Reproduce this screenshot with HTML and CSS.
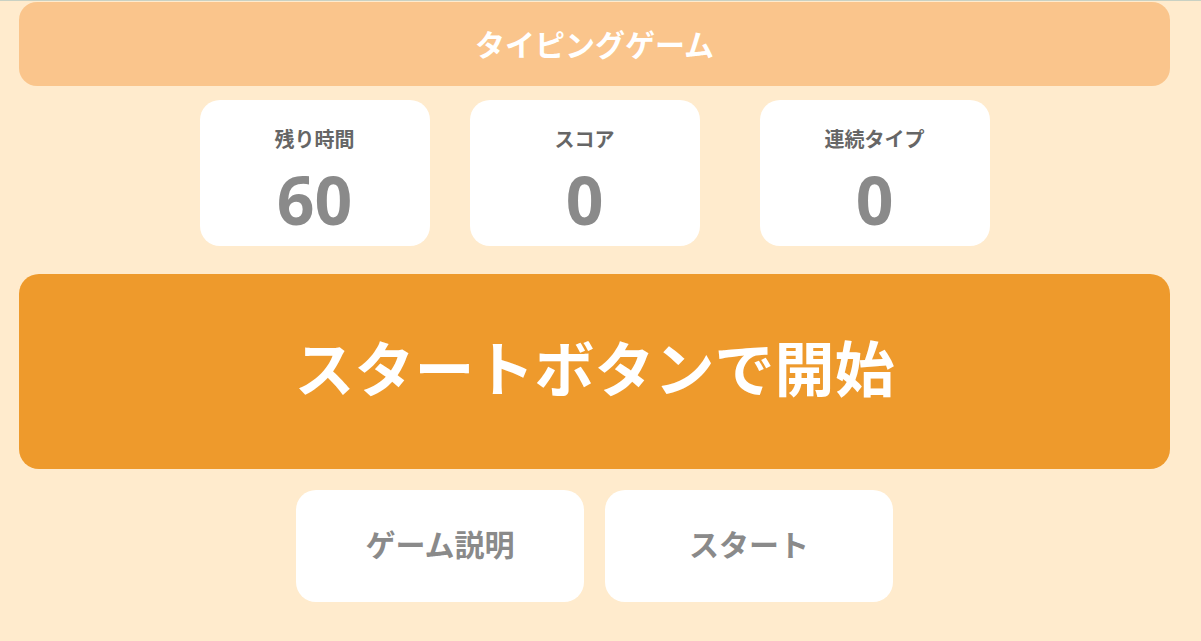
FILE: index.html
```html
<!DOCTYPE html>
<html lang="ja">
<head>
  <meta charset="UTF-8" />
  <meta name="viewport" content="width=device-width, initial-scale=1.0"/>
  <title>タイピングゲーム</title>
  <link rel="stylesheet" href="styles.css">
</head>
<body>

  <div class="wrap">
    <h1 class="title">タイピングゲーム</h1>

    <div class="stats">
      <div class="stat">
        <p class="stat-label">残り時間</p>
        <p class="stat-value" id="time">60</p>
      </div>
      <div class="stat">
        <p class="stat-label">スコア</p>
        <p class="stat-value" id="score">0</p>
      </div>
      <div class="stat stat-combo">
        <p class="stat-label">連続タイプ</p>
        <p class="stat-value" id="combo">0</p>
      </div>
    </div>

    <div class="word-box">
      <p id="word">スタートボタンで開始</p>
    </div>

    <div class="controls">
      <button class="btn" id="help">ゲーム説明</button>
      <button class="btn" id="start">スタート</button>
    </div>
  </div>

</body>
</html>
```

FILE: styles.css
```css
body {
  margin: 0;
  padding-top: 1px;
  border-top: 1px solid #c9d1c3;
  background-color: #ffebcd;
  font-family: "Open Sans", "Noto Sans CJK JP", sans-serif;
}

.wrap {
  width: 1151px;
  margin-left: 19px;
}

.title {
  margin: 0;
  height: 84px;
  padding-bottom: 3px;
  box-sizing: border-box;
  display: flex;
  justify-content: center;
  align-items: center;
  background-color: #fac58c;
  border-radius: 18px;
  color: #fff;
  font-size: 30px;
  font-weight: bold;
}

.stats {
  display: flex;
  justify-content: center;
  margin-top: 14px;
}

.stat {
  width: 230px;
  height: 146px;
  margin: 0 20px;
  background-color: #fff;
  border-radius: 20px;
  display: flex;
  flex-direction: column;
  align-items: center;
  box-sizing: border-box;
  padding-top: 26px;
}

.stat-combo {
  margin-left: 40px;
}

.stat-label {
  margin: 0;
  font-size: 20px;
  font-weight: bold;
  color: #666;
  line-height: 28px;
}

.stat-value {
  margin: 12px 0 0;
  font-size: 66px;
  font-weight: bold;
  color: #8a8a8a;
  line-height: 66px;
}

.word-box {
  margin-top: 28px;
  height: 195px;
  padding-bottom: 12px;
  box-sizing: border-box;
  background-color: #ee9a2c;
  border-radius: 20px;
  display: flex;
  justify-content: center;
  align-items: center;
}

#word {
  margin: 0;
  color: #fff;
  font-size: 60px;
  font-weight: bold;
}

.controls {
  display: flex;
  justify-content: center;
  gap: 21px;
  margin-top: 21px;
}

.btn {
  width: 288px;
  height: 112px;
  padding: 0 0 6px;
  border: none;
  border-radius: 20px;
  background-color: #fff;
  color: #8a8a8a;
  font-family: inherit;
  font-size: 30px;
  font-weight: bold;
  cursor: pointer;
}
```
